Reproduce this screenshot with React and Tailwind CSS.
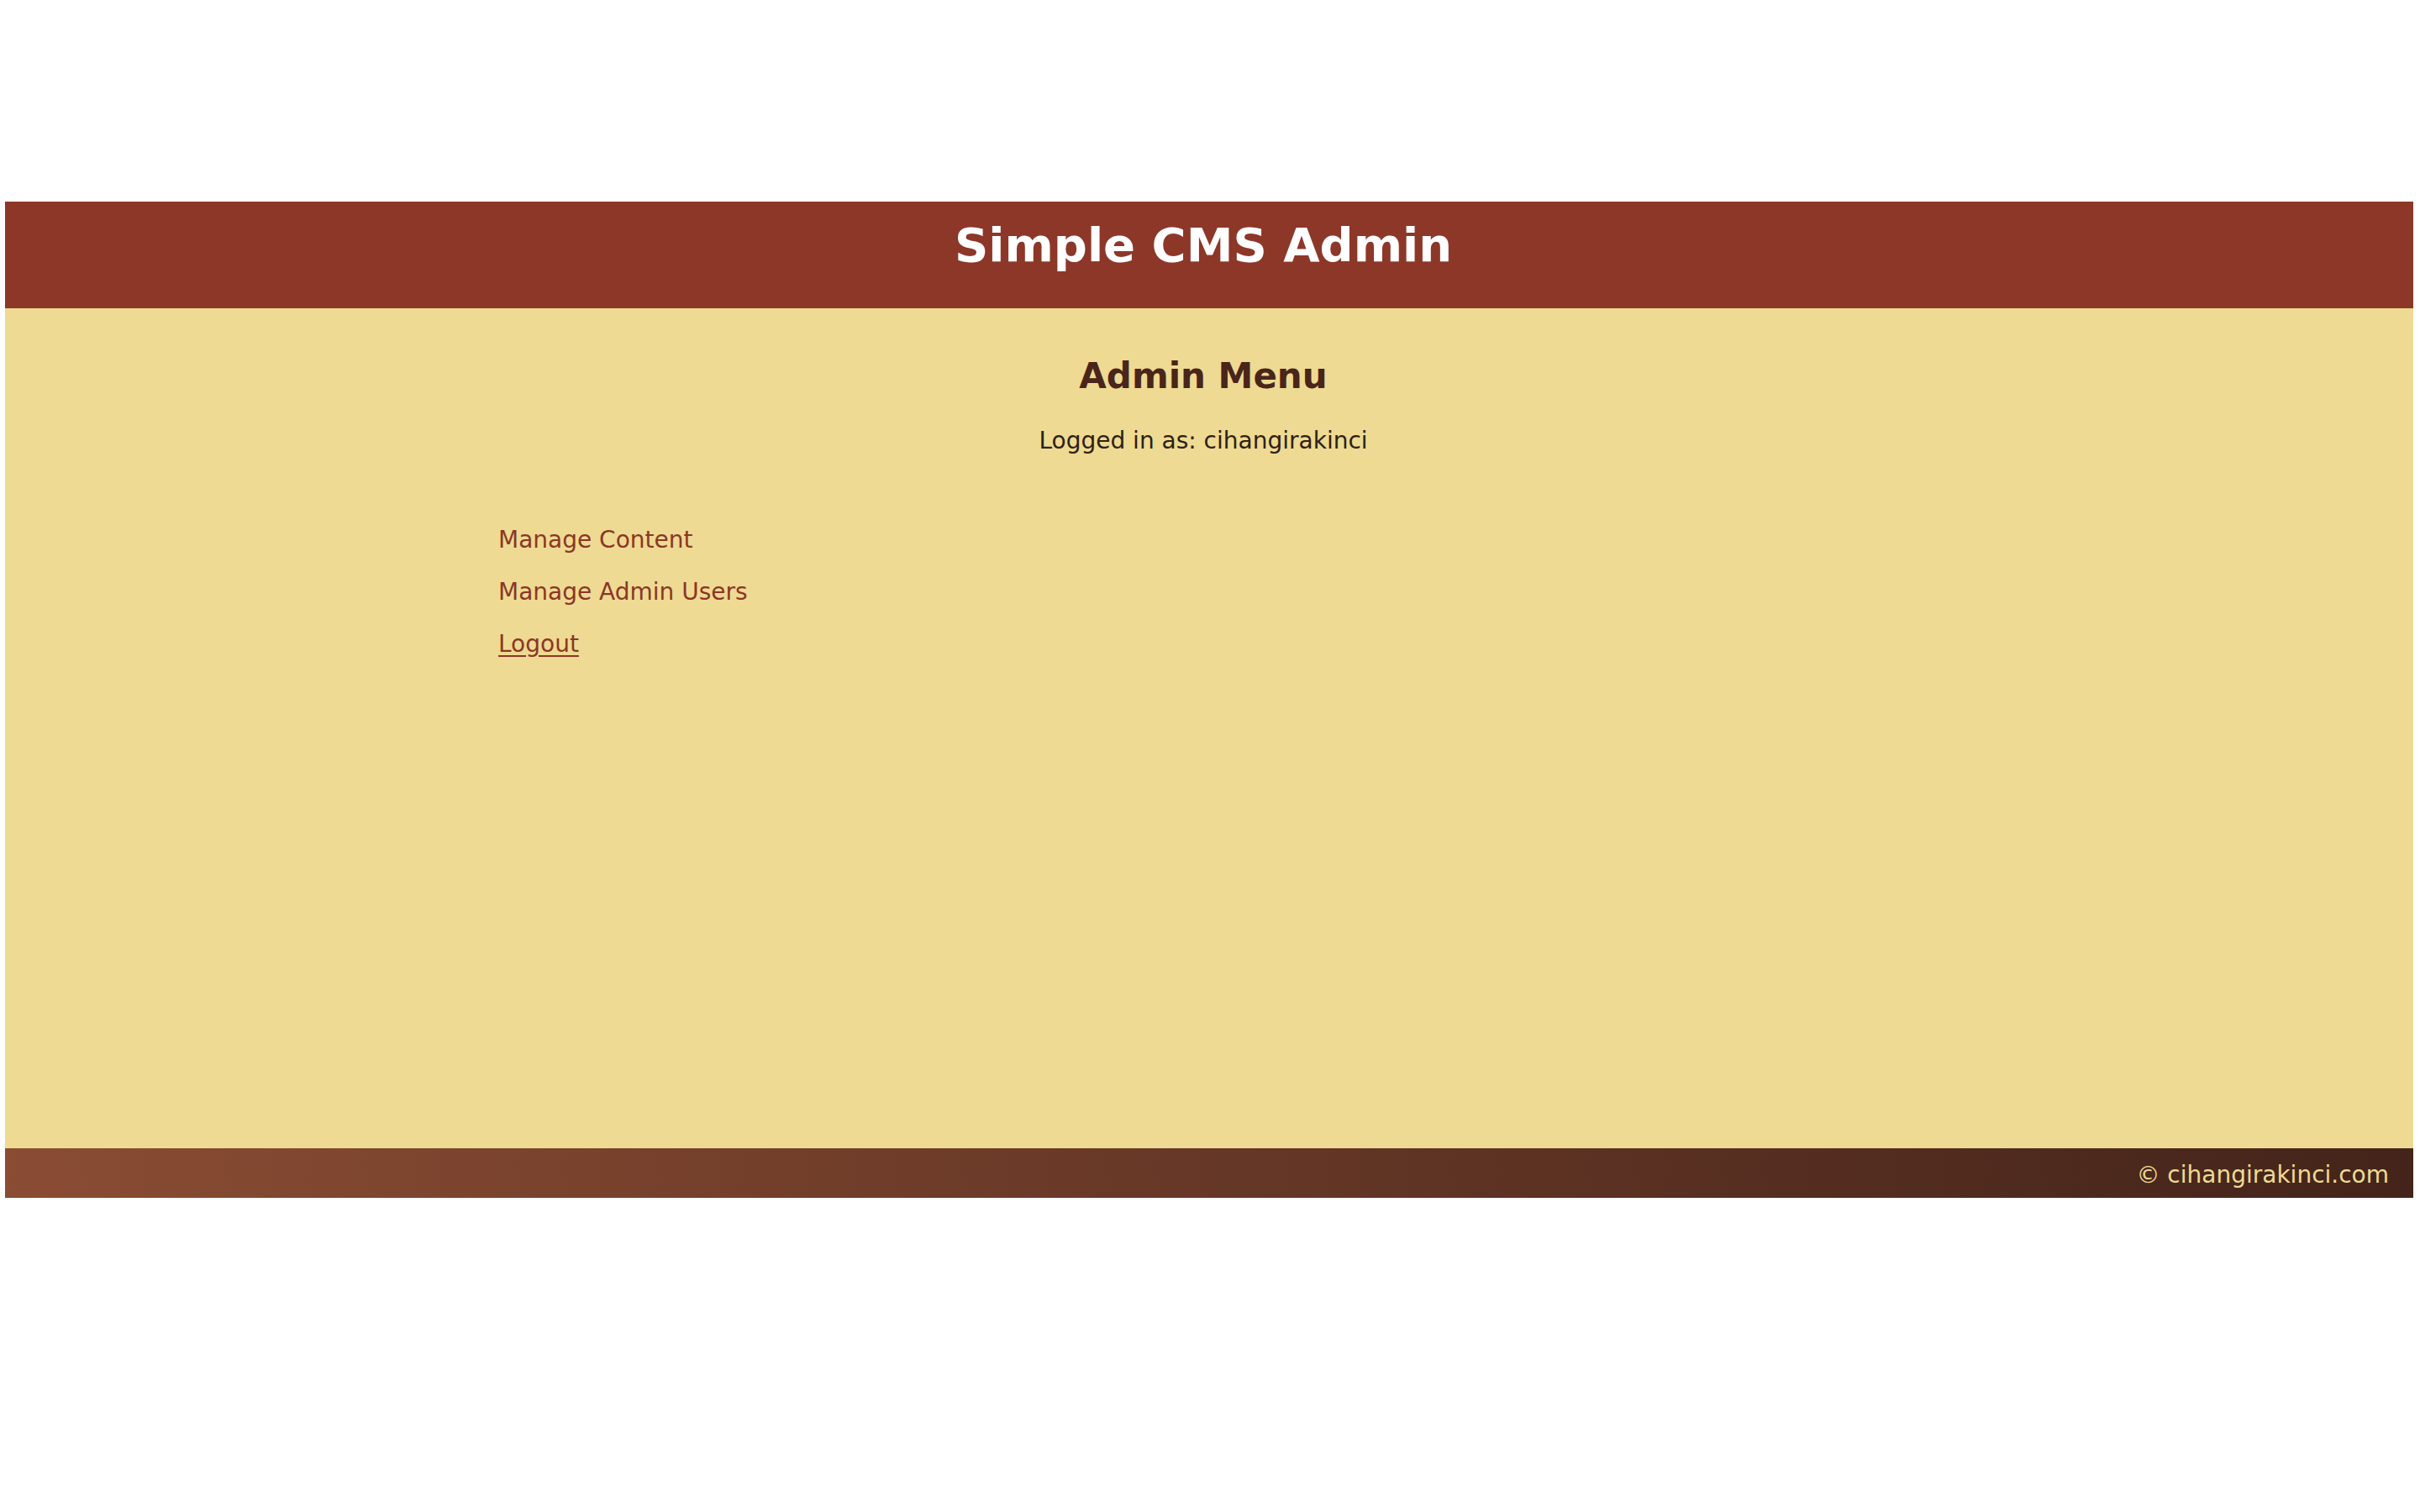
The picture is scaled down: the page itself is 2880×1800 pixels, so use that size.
export default function App() {
  const links = [
    { label: 'Manage Content', underline: false },
    { label: 'Manage Admin Users', underline: false },
    { label: 'Logout', underline: true },
  ];

  return (
    <div
      className="min-h-screen bg-white pt-[240px] pl-[6px] pr-[8px]"
      style={{ fontFamily: '"DejaVu Sans", Verdana, sans-serif' }}
    >
      {/* Header */}
      <header className="h-[127px] bg-[#8d3729] pt-[24px] pr-[14px] text-center">
        <h1 className="text-[56px] leading-none font-bold text-white">Simple CMS Admin</h1>
      </header>

      {/* Main */}
      <main className="h-[1000px] bg-[#eeda92] pt-[60px]">
        <div className="pr-[14px] text-center">
          <h2 className="text-[42px] leading-none font-bold text-[#4a2519]">Admin Menu</h2>
          <p className="mt-[42px] text-[28px] leading-none text-[#2e2114]">
            Logged in as: cihangirakinci
          </p>
        </div>
        <ul className="mt-[90px] pl-[587px] flex flex-col gap-[34px]">
          {links.map((l) => (
            <li key={l.label} className="text-[28px] leading-none">
              <a
                href="#"
                className={
                  l.underline
                    ? 'text-[#8b3626] underline underline-offset-[4px]'
                    : 'text-[#8b3626] no-underline'
                }
              >
                {l.label}
              </a>
            </li>
          ))}
        </ul>
      </main>

      {/* Footer */}
      <footer className="h-[59px] bg-linear-to-r from-[#8a4c33] to-[#44241a] pt-[18px] pr-[29px] text-right">
        <span className="text-[28px] leading-none text-[#eedb93]">© cihangirakinci.com</span>
      </footer>
    </div>
  );
}
